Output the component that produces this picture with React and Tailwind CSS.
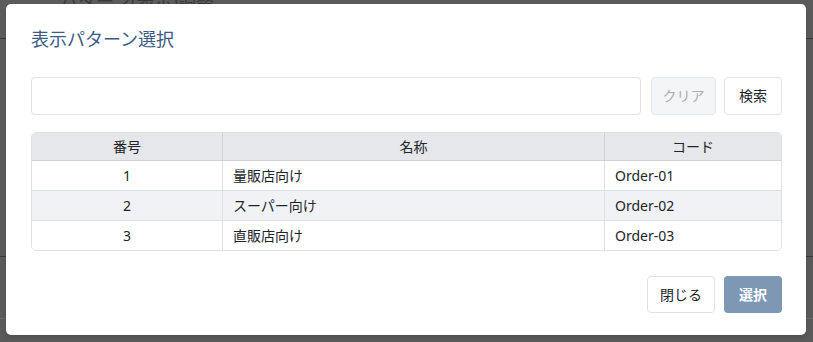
const rows = [
  { no: 1, name: "量販店向け", code: "Order-01" },
  { no: 2, name: "スーパー向け", code: "Order-02" },
  { no: 3, name: "直販店向け", code: "Order-03" },
];

export default function App() {
  return (
    <div
      className="relative h-[342px] w-full overflow-hidden bg-[#5b5b5b] text-[#212529]"
      style={{ fontFamily: '"Noto Sans", "Noto Sans CJK JP", sans-serif' }}
    >
      {/* dimmed page behind the dialog */}
      <div className="pointer-events-none">
        <div className="absolute left-[60px] top-[-12px] text-[18px] text-[#3a3a3a]">パターン(表示)調整</div>
        <div className="absolute left-0 right-0 top-[38px] h-px bg-[#2d3c52]" />
        <div className="absolute left-0 right-0 top-[256px] h-px bg-[#2d3c52]" />
        <div className="absolute left-0 right-0 top-[318px] h-px bg-[#6a6a6a]" />
      </div>

      <div className="absolute left-[6px] top-[4px] flex h-[331px] w-[800px] flex-col rounded-[5px] bg-white pl-[25px] pr-[24px] pt-[22px] shadow-md">
        <h2 className="h-[27px] text-[18px] leading-[27px] text-[#3b5b86]">表示パターン選択</h2>

        <div className="mt-[24px] flex h-[38px] items-center">
          <input
            type="text"
            className="h-[38px] w-[610px] rounded-[4px] border border-[#dee2e6] px-3 text-sm outline-none"
          />
          <button
            type="button"
            disabled
            className="ml-[10px] h-[38px] w-[65px] rounded-[4px] border border-[#e5e7eb] bg-[#f4f5f7] text-sm text-[#a8adb4]"
          >
            クリア
          </button>
          <button
            type="button"
            className="ml-[8px] h-[38px] w-[58px] rounded-[4px] border border-[#dee2e6] bg-white text-sm text-[#212529]"
          >
            検索
          </button>
        </div>

        <div className="mt-[17px] w-[751px] overflow-hidden rounded-[5px] border border-[#dcdfe3]">
          <div className="grid h-[28px] grid-cols-[191px_382px_1fr] border-b border-[#cfd3d8] bg-[#e6e7ea] text-sm leading-[28px]">
            <div className="border-r border-[#cfd3d8] text-center">番号</div>
            <div className="border-r border-[#cfd3d8] text-center">名称</div>
            <div className="text-center">コード</div>
          </div>
          {rows.map((row, i) => (
            <div
              key={row.no}
              className={`grid grid-cols-[191px_382px_1fr] text-sm ${
                i < rows.length - 1 ? "h-[30px] border-b border-[#dcdfe3] leading-[29px]" : "h-[29px] leading-[29px]"
              } ${i === 1 ? "bg-[#f1f2f5]" : "bg-white"}`}
            >
              <div className="border-r border-[#dcdfe3] text-center">{row.no}</div>
              <div className="border-r border-[#dcdfe3] pl-[10px]">{row.name}</div>
              <div className="pl-[10px]">{row.code}</div>
            </div>
          ))}
        </div>

        <div className="mt-[25px] flex justify-end">
          <button
            type="button"
            className="h-[37px] w-[68px] rounded-[4px] border border-[#dee2e6] bg-white text-sm text-[#212529]"
          >
            閉じる
          </button>
          <button
            type="button"
            className="ml-[9px] h-[37px] w-[58px] rounded-[4px] bg-[#7e97b5] text-sm font-bold text-white"
          >
            選択
          </button>
        </div>
      </div>
    </div>
  );
}
